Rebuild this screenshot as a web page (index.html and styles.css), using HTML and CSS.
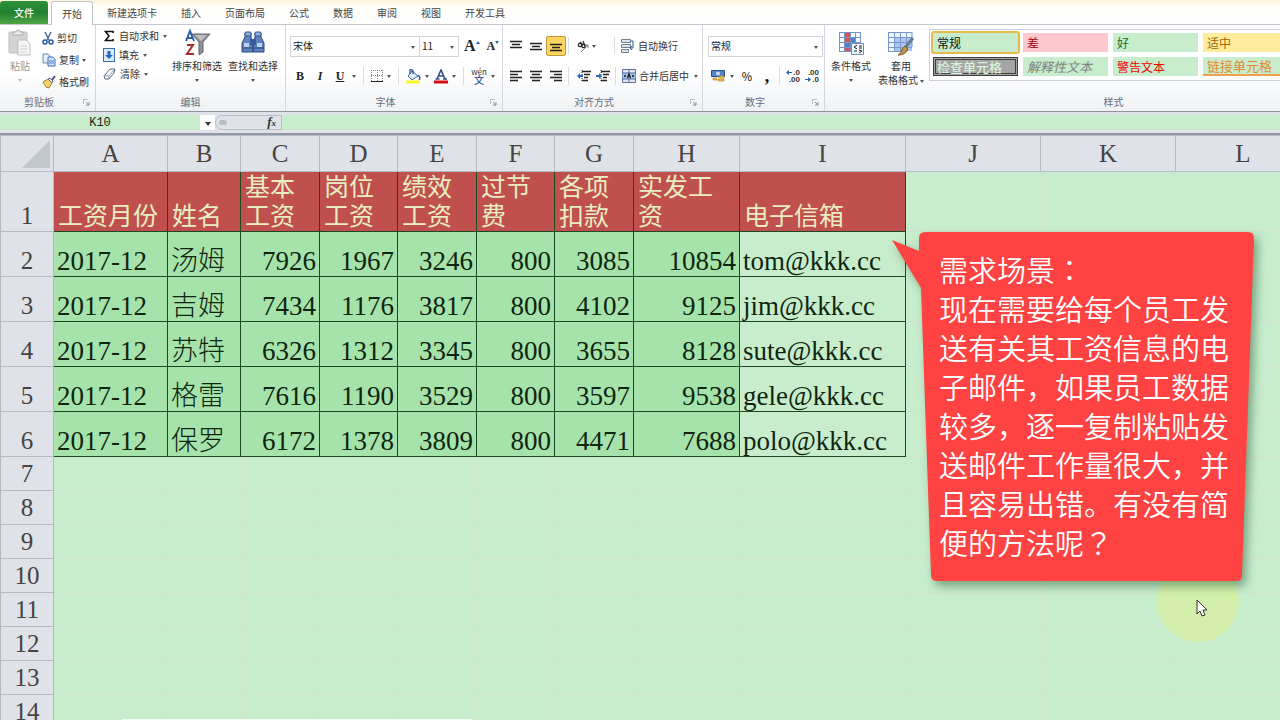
FILE: index.html
```html
<!DOCTYPE html>
<html lang="zh-CN">
<head>
<meta charset="utf-8">
<title>工资表</title>
<link rel="stylesheet" href="styles.css">
</head>
<body>
<div class="app">
  <nav class="tabs">
    <button class="tab file">文件</button>
    <button class="tab active">开始</button>
    <button class="tab">新建选项卡</button>
    <button class="tab">插入</button>
    <button class="tab">页面布局</button>
    <button class="tab">公式</button>
    <button class="tab">数据</button>
    <button class="tab">审阅</button>
    <button class="tab">视图</button>
    <button class="tab">开发工具</button>
  </nav>

  <div class="ribbon">
    <section class="group clipboard">
      <div class="tools">
        <button class="big faded">
          <svg width="26" height="28" viewBox="0 0 26 28"><rect x="2" y="3" width="18" height="21" rx="1" fill="#d3d3d5" stroke="#bdbdc0"/><path d="M6 6V3h3a2 2 0 0 1 4 0h3v3z" fill="#ededee" stroke="#aaa"/><path d="M11 11h8l4 4v11H11z" fill="#f7f7f8" stroke="#bdbdc0"/><path d="M13 17h7M13 20h7M13 23h7" stroke="#ccc"/></svg>
          <span>粘贴</span><i class="arrow"></i>
        </button>
        <div class="stack wide">
          <button class="small"><svg width="12" height="14" viewBox="0 0 12 14"><path d="M3 1l4 8M9 1L5 9" stroke="#56729f" stroke-width="1.6"/><circle cx="3" cy="11" r="2" fill="none" stroke="#2456a8" stroke-width="1.5"/><circle cx="9" cy="11" r="2" fill="none" stroke="#2456a8" stroke-width="1.5"/></svg>剪切</button>
          <button class="small"><svg width="14" height="14" viewBox="0 0 14 14"><path d="M1 1h5l2 2v7H1z" fill="#e5effb" stroke="#6689ba"/><path d="M6 4h5l2 2v7H6z" fill="#d4e4f7" stroke="#3f6cad"/><path d="M7 8h5M7 10h5" stroke="#4c7fc4"/></svg>复制<i class="arrow"></i></button>
          <button class="small"><svg width="14" height="14" viewBox="0 0 14 14"><path d="M1 7l5-3 4 4-3 5-3-1z" fill="#f1d564" stroke="#9c8233"/><path d="M6 4l2-1 3 3-1 2z" fill="#e8e8ef" stroke="#66688d"/><path d="M10 5l3-4" stroke="#4a4e86" stroke-width="2"/></svg>格式刷</button>
        </div>
      </div>
      <footer>剪贴板<svg class="launch" width="7" height="7" viewBox="0 0 7 7"><path d="M0 5V0h5M3 3l3 3M6 3v3H3" fill="none" stroke="#8a8f98"/></svg></footer>
    </section>

    <section class="group editing">
      <div class="tools">
        <div class="stack">
          <button class="small"><svg width="12" height="12" viewBox="0 0 12 12"><path d="M10 3V1.500H2.500L6 6l-3.500 4.500H10V9" fill="none" stroke="#111" stroke-width="1.600"/></svg>自动求和<i class="arrow"></i></button>
          <button class="small"><svg width="12" height="14" viewBox="0 0 12 14"><rect x=".5" y=".5" width="11" height="13" fill="#dceafa" stroke="#3a6db5"/><path d="M4.500 3h3v4h2.500L6 11 2 7h2.500z" fill="#2468c4"/></svg>填充<i class="arrow"></i></button>
          <button class="small"><svg width="13" height="12" viewBox="0 0 13 12"><path d="M1 8l6-7h5l-1 4-5 6H2z" fill="#fff" stroke="#59677f"/><path d="M1 8h5l5-6M6 8v3" fill="none" stroke="#8796b1"/></svg>清除<i class="arrow"></i></button>
        </div>
        <button class="big">
          <svg width="28" height="28" viewBox="0 0 28 28"><path d="M3 12L7 2l4 10M5 9h4" fill="none" stroke="#2c5eaa" stroke-width="2"/><path d="M4 16h6L4 25h7" fill="none" stroke="#a82c2c" stroke-width="2"/><path d="M9 5h18l-7 8v10l-4 3V13z" fill="#8e8f92" stroke="#65676c"/><path d="M12 6h12l-6 6z" fill="#bebfc2"/></svg>
          <span>排序和筛选</span><i class="arrow"></i>
        </button>
        <button class="big">
          <svg width="26" height="28" viewBox="0 0 26 28"><path d="M5 4h6v5l2 3v11H2V14l3-6zM15 4h6v4l3 6v9H13V12l2-3z" fill="#6083bd" stroke="#29497f"/><rect x="5" y="3" width="6" height="4" rx="1" fill="#90ade0" stroke="#34568e"/><rect x="15" y="3" width="6" height="4" rx="1" fill="#90ade0" stroke="#34568e"/><rect x="10" y="10" width="6" height="6" fill="#355c9d"/><path d="M4 14h5v4H4zM17 14h5v4h-5z" fill="#bdd0ee"/><path d="M2 19h10M14 19h10" stroke="#29497f"/></svg>
          <span>查找和选择</span><i class="arrow"></i>
        </button>
      </div>
      <footer>编辑</footer>
    </section>

    <section class="group font">
      <div class="tools rows">
        <div class="line">
          <span class="combo family"><select aria-label="字体"><option>宋体</option></select></span><span class="combo size"><select aria-label="字号"><option>11</option></select></span>
          <button class="serif grow" aria-label="增大字号">A<i class="tip up"></i></button>
          <button class="serif shrink" aria-label="减小字号">A<i class="tip"></i></button>
        </div>
        <div class="line formats">
          <button class="serif bold">B</button><button class="serif italic">I</button><button class="serif under">U</button><i class="arrow"></i>
          <i class="bar"></i>
          <button aria-label="边框"><svg width="12" height="12" viewBox="0 0 12 12"><path d="M.5 0v11M6.500 0v11M11.500 0v11M0 .5h12M0 5.500h12" stroke="#888" stroke-dasharray="1 1"/><path d="M0 11.500h12" stroke="#222"/></svg></button><i class="arrow"></i>
          <i class="bar"></i>
          <button aria-label="填充颜色"><svg width="15" height="15" viewBox="0 0 15 15"><path d="M6 2l6 5-6 4-4-4z" fill="#dfe9f7" stroke="#3d628f"/><path d="M4 5V1q2-1 3 1v3M12 6q3 2 1 5" fill="none" stroke="#315f9e" stroke-width="1.400"/><path d="M0 11.500h14v3H0z" fill="#f7f72c"/></svg></button><i class="arrow"></i>
          <button aria-label="字体颜色"><svg width="14" height="15" viewBox="0 0 14 15"><path d="M3 10L7 1l4 9M4.500 7h5M1.500 10h4M9 10h4" fill="none" stroke="#314f86" stroke-width="1.600"/><path d="M0 11.500h14v3H0z" fill="#d70c18"/></svg></button><i class="arrow"></i>
          <i class="bar"></i>
          <button class="phonetic" aria-label="拼音"><span>wén</span><b>文</b></button><i class="arrow"></i>
        </div>
      </div>
      <footer>字体<svg class="launch" width="7" height="7" viewBox="0 0 7 7"><path d="M0 5V0h5M3 3l3 3M6 3v3H3" fill="none" stroke="#8a8f98"/></svg></footer>
    </section>

    <section class="group align">
      <div class="tools rows">
        <div class="line">
          <button class="ic" aria-label="顶端对齐"><svg width="12" height="12" viewBox="0 0 12 12"><path d="M0 1.500h12M2 4.500h8M0 7.500h12"/></svg></button>
          <button class="ic" aria-label="垂直居中"><svg width="12" height="12" viewBox="0 0 12 12"><path d="M0 3.500h12M2 6.500h8M0 9.500h12"/></svg></button>
          <button class="ic on" aria-label="底端对齐"><svg width="12" height="12" viewBox="0 0 12 12"><path d="M0 4.500h12M2 7.500h8M0 10.500h12"/></svg></button>
          <i class="bar"></i>
          <button aria-label="方向"><svg width="13" height="13" viewBox="0 0 13 13"><g fill="none" stroke="#222" stroke-width="1.200"><circle cx="3" cy="5" r="1.700"/><path d="M3 2l3 3"/><circle cx="6.500" cy="6" r="1.700"/><path d="M6 1l2 5"/></g><path d="M4 12l7-7M8 5h3v3" fill="none" stroke="#777"/></svg></button><i class="arrow"></i>
          <i class="bar late"></i>
          <button class="small"><svg width="14" height="14" viewBox="0 0 14 14"><path d="M.5.500h9v3h-9zM.5 5.500h9v3h-9zM.5 10.500h7v3h-7z" fill="#dce6f2" stroke="#75808f"/><path d="M10 2h2v7H9M11 7L9 9l2 2" fill="none" stroke="#2e558d"/></svg>自动换行</button>
        </div>
        <div class="line">
          <button class="ic" aria-label="左对齐"><svg width="12" height="12" viewBox="0 0 12 12"><path d="M0 1.500h12M0 4.500h8M0 7.500h12M0 10.500h8"/></svg></button>
          <button class="ic" aria-label="居中"><svg width="12" height="12" viewBox="0 0 12 12"><path d="M0 1.500h12M2 4.500h8M0 7.500h12M2 10.500h8"/></svg></button>
          <button class="ic" aria-label="右对齐"><svg width="12" height="12" viewBox="0 0 12 12"><path d="M0 1.500h12M4 4.500h8M0 7.500h12M4 10.500h8"/></svg></button>
          <i class="bar"></i>
          <button aria-label="减少缩进量"><svg width="14" height="12" viewBox="0 0 14 12"><path d="M5 1.500h9M7 4.500h6M7 7.500h4M5 10.500h6" stroke="#222" stroke-width="1.300"/><path d="M5 0v12" stroke="#222" stroke-dasharray="1 1"/><path d="M0 6l3-3v2h3v2H3v2z" fill="#2b68bd"/></svg></button>
          <button class="indent" aria-label="增加缩进量"><svg width="14" height="12" viewBox="0 0 14 12"><path d="M5 1.500h9M7 4.500h6M7 7.500h4M5 10.500h6" stroke="#222" stroke-width="1.300"/><path d="M5 0v12" stroke="#222" stroke-dasharray="1 1"/><path d="M6 6L3 3v2H0v2h3v2z" fill="#2b68bd"/></svg></button>
          <i class="bar"></i>
          <button class="small"><svg width="14" height="14" viewBox="0 0 14 14"><path d="M.5.500h13v13H.5zM7 0v4M7 10v4" fill="#dfe9f6" stroke="#5d7092"/><path d="M0 4h14v6H0z" fill="#a9c3e8" stroke="#4c699a"/><path d="M5.500 9L7 5l1.500 4M2 7h2M10 7h2" fill="none" stroke="#111" stroke-width="1.300"/></svg>合并后居中<i class="arrow"></i></button>
        </div>
      </div>
      <footer>对齐方式<svg class="launch" width="7" height="7" viewBox="0 0 7 7"><path d="M0 5V0h5M3 3l3 3M6 3v3H3" fill="none" stroke="#8a8f98"/></svg></footer>
    </section>

    <section class="group number">
      <div class="tools rows">
        <div class="line"><span class="combo kind"><select aria-label="数字格式"><option>常规</option></select></span></div>
        <div class="line numerals">
          <button aria-label="会计数字格式"><svg width="15" height="14" viewBox="0 0 15 14"><path d="M.5 1.500h13v6H.5z" fill="#5585cb" stroke="#294f93"/><circle cx="7" cy="4.500" r="2" fill="#cfe0f7"/><path d="M8 7h5v2H8zM7 10h6v2H7zM2 9h4v2H2z" fill="#efc34e" stroke="#a77820" stroke-width=".6"/></svg></button><i class="arrow"></i>
          <button class="pct">%</button><button class="comma">,</button>
          <i class="bar"></i>
          <button class="dec" aria-label="增加小数位数"><span><svg width="7" height="7" viewBox="0 0 7 7"><path d="M0 3.500L3 1v2h3v1H3v2z" fill="#2462b8"/></svg>.0</span><span>.00</span></button>
          <button class="dec" aria-label="减少小数位数"><span>.00</span><span><svg width="7" height="7" viewBox="0 0 7 7"><path d="M6 3.500L3 1v2H0v1h3v2z" fill="#2462b8"/></svg>.0</span></button>
        </div>
      </div>
      <footer>数字<svg class="launch" width="7" height="7" viewBox="0 0 7 7"><path d="M0 5V0h5M3 3l3 3M6 3v3H3" fill="none" stroke="#8a8f98"/></svg></footer>
    </section>

    <section class="group styles">
      <div class="tools">
        <button class="big"><svg width="26" height="28" viewBox="0 0 26 28"><path d="M1 3h22v19H1z" fill="#f5f9ff"/><path d="M7 3h5v19H7z" fill="#e34e4e"/><path d="M12 8h6v5h-6zM7 13h5v5H7z" fill="#547ec7"/><path d="M1 3.500h22M1 8.500h22M1 13.500h22M1 18.500h18M1 22.500h14M1.500 3v19M6.500 3v19M12.500 3v19M17.500 3v12M22.500 3v12" stroke="#7694c5"/><path d="M13.500 14.500h12v11h-12z" fill="#f1f5fc" stroke="#6f89b5"/><path d="M19 16l-3 2 3 2M16 22h3M21 17h3M21 19h3M21 21l3 1-3 2" fill="none" stroke="#222"/></svg><span>条件格式</span><i class="arrow"></i></button>
        <button class="big format"><svg width="28" height="28" viewBox="0 0 28 28"><path d="M1 3h24v19H1z" fill="#edf4fd"/><path d="M7 8h18v14H7z" fill="#a8c7ef"/><path d="M1 3.500h24M1 8.500h24M1 13.500h24M1 18.500h24M1 22.500h18M1.500 3v19M7.500 3v19M13.500 3v19M19.500 3v19M25 3v15" stroke="#7897c6"/><path d="M26 9L17 20" stroke="#697a92" stroke-width="3"/><path d="M18 17l3 3q-2 6-10 6 4-2 4-6z" fill="#bd914d" stroke="#785b2f"/></svg><span>套用</span><span>表格格式<i class="arrow"></i></span></button>
        <div class="gallery">
          <button class="style normal">常规</button><button class="style bad">差</button><button class="style good">好</button><button class="style neutral">适中</button>
          <button class="style check">检查单元格</button><button class="style explain">解释性文本</button><button class="style warn">警告文本</button><button class="style linked">链接单元格</button>
        </div>
      </div>
      <footer>样式</footer>
    </section>
  </div>

  <div class="formula">
    <input class="namebox" aria-label="名称框" value="K10">
    <button class="drop" aria-label="名称列表"><i class="arrow"></i></button>
    <div class="fx"><i class="knob"></i><button aria-label="插入函数">f<sub>x</sub></button></div>
    <input class="entry" aria-label="编辑栏">
  </div>

  <main class="sheet">
    <table>
      <colgroup><col class="c-row"><col class="c-a"><col class="c-b"><col class="c-n"><col class="c-m"><col class="c-n"><col class="c-m"><col class="c-n"><col class="c-h"><col class="c-i"><col class="c-j"><col class="c-j"><col class="c-j"></colgroup>
      <thead><tr><th class="corner"><svg width="28" height="28" viewBox="0 0 28 28"><path d="M28 0v28H0z" fill="#c2c7cc"/></svg></th><th>A</th><th>B</th><th>C</th><th>D</th><th>E</th><th>F</th><th>G</th><th>H</th><th>I</th><th>J</th><th>K</th><th>L</th></tr></thead>
      <tbody>
        <tr class="title"><th>1</th><td>工资月份</td><td>姓名</td><td>基本<br>工资</td><td>岗位<br>工资</td><td>绩效<br>工资</td><td>过节<br>费</td><td>各项<br>扣款</td><td>实发工<br>资</td><td>电子信箱</td><td></td><td></td><td></td></tr>
        <tr class="data"><th>2</th><td>2017-12</td><td>汤姆</td><td>7926</td><td>1967</td><td>3246</td><td>800</td><td>3085</td><td>10854</td><td>tom@kkk.cc</td><td></td><td></td><td></td></tr>
        <tr class="data"><th>3</th><td>2017-12</td><td>吉姆</td><td>7434</td><td>1176</td><td>3817</td><td>800</td><td>4102</td><td>9125</td><td>jim@kkk.cc</td><td></td><td></td><td></td></tr>
        <tr class="data"><th>4</th><td>2017-12</td><td>苏特</td><td>6326</td><td>1312</td><td>3345</td><td>800</td><td>3655</td><td>8128</td><td>sute@kkk.cc</td><td></td><td></td><td></td></tr>
        <tr class="data"><th>5</th><td>2017-12</td><td>格雷</td><td>7616</td><td>1190</td><td>3529</td><td>800</td><td>3597</td><td>9538</td><td>gele@kkk.cc</td><td></td><td></td><td></td></tr>
        <tr class="data"><th>6</th><td>2017-12</td><td>保罗</td><td>6172</td><td>1378</td><td>3809</td><td>800</td><td>4471</td><td>7688</td><td>polo@kkk.cc</td><td></td><td></td><td></td></tr>
        <tr><th>7</th><td></td><td></td><td></td><td></td><td></td><td></td><td></td><td></td><td></td><td></td><td></td><td></td></tr>
        <tr><th>8</th><td></td><td></td><td></td><td></td><td></td><td></td><td></td><td></td><td></td><td></td><td></td><td></td></tr>
        <tr><th>9</th><td></td><td></td><td></td><td></td><td></td><td></td><td></td><td></td><td></td><td></td><td></td><td></td></tr>
        <tr><th>10</th><td></td><td></td><td></td><td></td><td></td><td></td><td></td><td></td><td></td><td></td><td></td><td></td></tr>
        <tr><th>11</th><td></td><td></td><td></td><td></td><td></td><td></td><td></td><td></td><td></td><td></td><td></td><td></td></tr>
        <tr><th>12</th><td></td><td></td><td></td><td></td><td></td><td></td><td></td><td></td><td></td><td></td><td></td><td></td></tr>
        <tr><th>13</th><td></td><td></td><td></td><td></td><td></td><td></td><td></td><td></td><td></td><td></td><td></td><td></td></tr>
        <tr><th>14</th><td></td><td></td><td></td><td></td><td></td><td></td><td></td><td></td><td></td><td></td><td></td><td></td></tr>
      </tbody>
    </table>
    <div class="pointer"><svg width="12" height="18" viewBox="0 0 12 18"><path d="M1 1v14l3-3 2 5 3-1-2-5h4z" fill="#fff" stroke="#333"/></svg></div>
    <aside class="callout">
      <svg class="shape" width="364" height="350" viewBox="0 0 364 350"><path d="M33 0H356Q362 0 362 6L350 343Q350 349 344 349H45Q39 349 39 343L29 56 0 8 27 19V6Q27 0 33 0z" fill="#ff4242"/></svg>
      <p>需求场景<span class="mid" lang="zh-TW">：</span></p>
      <p>现在需要给每个员工发送有关其工资信息的电子邮件，如果员工数据较多，逐一复制粘贴发送邮件工作量很大，并且容易出错。有没有简便的方法呢<span class="mid" lang="zh-TW">？</span></p>
    </aside>
    <div class="edge"></div>
  </main>
</div>
</body>
</html>
```
FILE: styles.css
```css
* { box-sizing: border-box; }
body { margin: 0; overflow: hidden; font: 10px/14px "Noto Sans CJK SC", sans-serif; color: #333; }
button, select, input { font: inherit; color: inherit; margin: 0; padding: 0; border: 0; background: none; border-radius: 0; }
i { font-style: normal; }
svg { display: block; flex: none; }
.app { display: flex; flex-direction: column; height: 100vh; background: #c7edcc; }

.tabs { display: flex; height: 25px; flex: none; padding-top: 1px; border-bottom: 1px solid #c3c6cf; background: linear-gradient(#fcf3d9, #fffefa 7px, #fefefe); }
.tab { padding: 0 12px; height: 24px; color: #444; white-space: nowrap; }
.file { width: 48px; height: 23px; margin-right: 3px; color: #fff; font-weight: 500; border-radius: 3px 3px 0 0; background: linear-gradient(#2c913b, #238032 50%, #4da644); }
.active { padding: 0 10px; border: 1px solid #c3c6cf; border-bottom: 0; border-radius: 3px 3px 0 0; background: #fff; margin-right: 2px; }

.ribbon { display: flex; height: 87px; flex: none; border-bottom: 1px solid #8d929d; background: linear-gradient(#fff 55%, #eff1f4); }
.group { display: flex; flex-direction: column; flex: none; border-right: 1px solid #d4d7de; }
.group footer { display: flex; justify-content: center; align-items: center; height: 16px; margin-bottom: 1px; padding-right: 17px; color: #666d7b; position: relative; }
.launch { position: absolute; right: 5px; top: 5px; }
.clipboard { width: 96px; }
.editing { width: 190px; }
.group.editing footer { padding-right: 0; }
.font { width: 217px; }
.align { width: 200px; }
.number { width: 122px; }
.styles { flex: 1 1 0; min-width: 0; border: 0; }
.group.styles footer { padding-right: 0; padding-left: 122px; }
.tools { display: flex; flex: 1; min-height: 0; }
.rows { flex-direction: column; padding: 10px 0 0 4px; gap: 8px; }
.line { display: flex; align-items: center; height: 22px; }
.arrow { flex: none; display: inline-block; width: 0; height: 0; border: 2px solid transparent; border-top: 3px solid #555; border-bottom: 0; }
.big { display: flex; flex-direction: column; align-items: center; padding-top: 4px; height: 68px; width: 56px; white-space: nowrap; }
.big > svg { margin-bottom: 2px; }
.big > .arrow { margin-top: 6px; }
.faded { width: 40px; color: #999; }
.faded .arrow { border-top-color: #bbb; }
.small { display: flex; align-items: center; gap: 4px; white-space: nowrap; }
.stack { display: flex; flex-direction: column; align-items: flex-start; gap: 5px; padding-top: 4px; }
.stack.wide { gap: 8px; padding-top: 6px; padding-left: 2px; }
.stack.wide .small { gap: 3px; }
.editing .stack { width: 67px; flex: none; padding-left: 7px; }
.editing .big:first-of-type { margin-left: 6px; }
.styles .big { width: 52px; }
.styles .format { width: 48px; }
.format .arrow { margin-left: 2px; vertical-align: middle; }

.combo { position: relative; display: block; height: 21px; border: 1px solid #d1d4da; background: #fff; }
.combo select { appearance: none; width: 100%; height: 100%; padding-left: 2px; color: #222; }
.combo::after { content: ""; position: absolute; right: 4px; top: 9px; border: 2px solid transparent; border-top: 3px solid #555; border-bottom: 0; pointer-events: none; }
.family { width: 130px; }
.size { width: 40px; margin-left: -1px; }
.kind { width: 115px; }
.number .combo { margin-left: 1px; }
.serif { font-family: "Liberation Serif", serif; font-weight: bold; font-size: 12px; color: #222; }
.grow, .shrink { display: flex; align-items: center; margin-left: 5px; font-size: 16px; }
.shrink { font-size: 12px; margin-left: 7px; }
.tip { width: 0; height: 0; margin-bottom: 8px; border: 2px solid transparent; border-top: 3px solid #3d5f9d; border-bottom: 0; }
.tip.up { border-top: 0; border-bottom: 3px solid #3d5f9d; }
.formats .serif { width: 20px; }
.italic { font-style: italic; }
.under { text-decoration: underline; }
.bar { flex: none; width: 1px; height: 18px; margin: 0 8px; background: #dcdee3; }
.formats .arrow { margin-left: 4px; }
.formats .arrow + button { margin-left: 5px; }
.formats .under + .arrow { margin-left: 2px; }
.formats .bar { margin: 0 7px; }
.phonetic { width: 16px; display: flex; flex-direction: column; align-items: center; font-size: 8px; line-height: 7px; }
.phonetic b { font-size: 10px; line-height: 9px; color: #31589d; font-weight: 500; }
.ic { width: 20px; height: 20px; display: grid; place-items: center; }
.ic path { stroke: #222; stroke-width: 1.5; }
.align .rows { padding-left: 3px; }
.ic.on { border: 1px solid #c3973a; border-radius: 2px; background: #fbd55f; }
.align .bar { margin: 0 7px 0 3px; }
.align .ic + .bar { margin: 0 8px 0 2px; }
.align .arrow { margin-left: 2px; }
.align .bar.late { margin: 0 6px 0 18px; }
.align .indent { margin-left: 5px; }
.align .indent + .bar { margin: 0 6px 0 5px; }
.align .small { gap: 3px; }
.numerals { padding-left: 4px; }
.numerals .arrow { margin-left: 4px; }
.pct { width: 26px; font-size: 11px; font-weight: 500; }
.comma { width: 14px; font: bold 18px/12px "Liberation Serif", serif; color: #111; }
.numerals .bar { margin: 0 5px; }
.dec { width: 15px; margin-right: 4px; display: flex; flex-direction: column; align-items: flex-end; font: bold 8px/7px "Liberation Sans", sans-serif; }
.dec span { display: flex; }

.gallery { display: grid; grid-template-columns: repeat(4, 85px); grid-template-rows: 19px 19px; column-gap: 5px; row-gap: 5px; height: 52px; flex: 1; min-width: 0; overflow: hidden; padding: 3px 3px; margin: 4px 0 0 4px; border: 1px solid #ccd0d7; border-right: 0; background: #fff; }
.style { text-align: left; padding-left: 4px; font-size: 12px; line-height: 16px; background: #c7edcc; white-space: nowrap; }
.normal { color: #111; outline: 2px solid #e7b84b; border-radius: 1px; }
.bad { background: #ffc7ce; color: #9c0006; }
.good { color: #12701f; }
.neutral { background: #ffeb9c; color: #9c6500; }
.check { background: #a5a5a5; color: #d4f4d8; border: 3px double #3f3f3f; padding-left: 1px; font-size: 13px; line-height: 12px; font-weight: 500; }
.explain { color: #7f7f7f; font-style: italic; font-size: 13px; }
.warn { color: #f00000; }
.linked { color: #e5892d; border-bottom: 2px solid #f0a04b; font-size: 13px; }

.formula { display: flex; flex: none; height: 23px; padding: 3px 0; border-bottom: 2px solid #8f97a8; background: #dfe2e8; }
.namebox { width: 200px; background: #c7edcc; text-align: center; font: 12px "Liberation Mono", monospace; color: #222; }
.drop { width: 15px; background: #fff; }
.drop .arrow { border-width: 4px 3px 0; border-top-color: #333; vertical-align: middle; }
.fx { width: 67px; display: flex; align-items: center; justify-content: space-between; padding-right: 5px; border: 1px solid #b6bbc6; border-radius: 9px 0 0 9px; }
.fx button { font: italic bold 13px/14px "Liberation Serif", serif; }
.fx sub { font-size: 9px; vertical-align: baseline; }
.knob { width: 8px; height: 5px; margin-left: 3px; border-radius: 4px; background: #b9bec7; }
.entry { flex: 1; min-width: 0; background: #c7edcc; }

.sheet { position: relative; flex: 1; min-height: 0; overflow: hidden; }
table { border-collapse: collapse; table-layout: fixed; width: 1310px; color: #10250f; font: 27px/30px "Liberation Serif", "Noto Sans CJK SC", serif; }
.c-row { width: 53px; }
.c-a { width: 114px; }
.c-b { width: 73px; }
.c-n { width: 79px; }
.c-m { width: 78px; }
.c-h { width: 106px; }
.c-i { width: 166px; }
.c-j { width: 135px; }
th, td { padding: 0; height: 34px; border: 1px solid #cee3d1; }
th { font-weight: 400; font-size: 25px; color: #444; background: #dfe2e8; border-color: #b4b9c3; }
thead th { height: 36px; }
.corner { padding: 0 3px 0 0; }
.corner svg { margin-left: auto; }
.title td, .data td { vertical-align: bottom; white-space: nowrap; }
.title td { height: 60px; padding: 0 4px; font-size: 25px; line-height: 29px; font-weight: 400; color: #e9edc3; }
.title th, .data th { vertical-align: bottom; }
.data td { height: 45px; padding: 0 3px; text-align: right; font-weight: 300; }
.data td:nth-child(-n+3), .data td:nth-child(10) { text-align: left; }
.title td:nth-child(-n+10), .data td:nth-child(-n+10) { border-color: #1b4a22; }
.title td:nth-child(-n+10) { background: #c0504d; }
.data td:nth-child(-n+9) { background: #a6e3ab; }

.callout { position: absolute; left: 892px; top: 97px; width: 362px; height: 350px; padding: 18px 18px 0 47px; color: #fff; font-size: 29px; line-height: 39px; font-weight: 350; }
.callout p { position: relative; margin: 0; }
.mid { font-family: "Noto Sans CJK TC", sans-serif; }
.shape { position: absolute; left: 0; top: 0; overflow: visible; filter: drop-shadow(4px 5px 5px rgba(40, 90, 50, .5)); }
.pointer { position: absolute; left: 1157px; top: 425px; width: 82px; height: 82px; padding: 14px 0 0 8px; border-radius: 50%; background: #d2eeaa; display: grid; place-items: center; }
.edge { position: absolute; left: 122px; bottom: 0; width: 350px; height: 1px; background: #f4fbf5; }
```
